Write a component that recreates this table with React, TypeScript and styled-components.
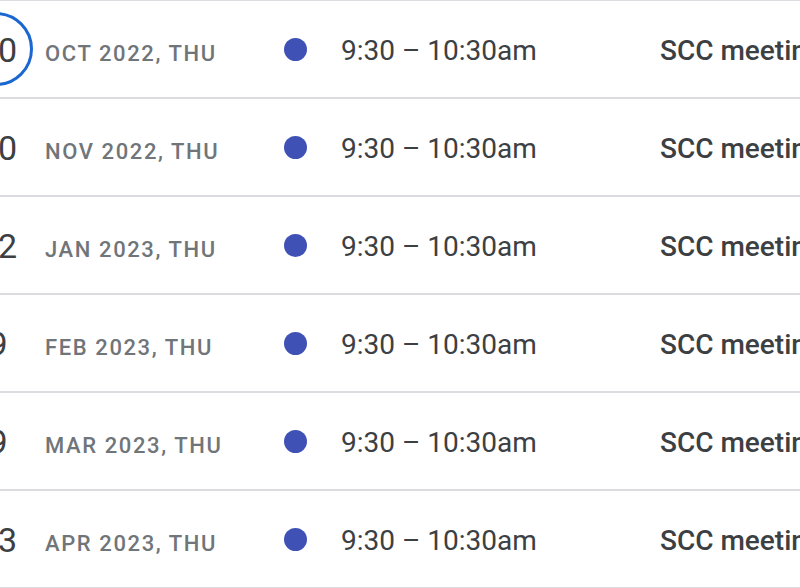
import React from "react";
import styled, { createGlobalStyle } from "styled-components";

const GlobalStyle = createGlobalStyle`
  html, body {
    margin: 0;
    padding: 0;
    background: #ffffff;
    overflow: hidden;
  }
  body {
    font-family: Roboto, "Noto Sans", Arial, sans-serif;
  }
`;

const Agenda = styled.div`
  width: 800px;
  height: 589px;
  overflow: hidden;
  margin-top: -1px;
`;

const Row = styled.div`
  display: flex;
  align-items: center;
  box-sizing: border-box;
  height: 98px;
  border-top: 2px solid #dadce0;
  margin-left: -44px;
  white-space: nowrap;

  &:last-child {
    height: 100px;
    border-bottom: 2px solid #dadce0;
  }
`;

const DayCell = styled.div`
  flex: 0 0 80px;
  display: flex;
  align-items: center;
  justify-content: center;
`;

const DayNumber = styled.div<{ $current?: boolean }>`
  width: 74px;
  height: 74px;
  box-sizing: border-box;
  border-radius: 50%;
  border: 3px solid ${(p) => (p.$current ? "#1a67d2" : "transparent")};
  display: flex;
  align-items: center;
  justify-content: center;
  font-size: 34px;
  font-weight: 400;
  color: #3c4043;
  padding-top: 2px;
  padding-left: 4px;
`;

const DateLabel = styled.div`
  flex: 0 0 239px;
  margin-left: 9px;
  font-size: 22px;
  font-weight: 500;
  letter-spacing: 1.6px;
  color: #70757a;
  text-transform: uppercase;
  padding-top: 9px;
`;

const Dot = styled.span<{ $color: string }>`
  flex: 0 0 23px;
  height: 23px;
  border-radius: 50%;
  background: ${(p) => p.$color};
  margin-right: 34px;
`;

const Time = styled.div`
  flex: 0 0 319px;
  font-size: 28px;
  color: #3c4043;
  padding-top: 2px;
`;

const Title = styled.div`
  font-size: 28px;
  font-weight: 500;
  color: #3c4043;
  padding-top: 2px;
`;

const events = [
  { day: "20", label: "Oct 2022, Thu", current: true },
  { day: "10", label: "Nov 2022, Thu" },
  { day: "12", label: "Jan 2023, Thu" },
  { day: "9", label: "Feb 2023, Thu" },
  { day: "9", label: "Mar 2023, Thu" },
  { day: "13", label: "Apr 2023, Thu" },
];

export default function App() {
  return (
    <>
      <GlobalStyle />
      <Agenda>
        {events.map((e, i) => (
          <Row key={i}>
            <DayCell>
              <DayNumber $current={e.current}>{e.day}</DayNumber>
            </DayCell>
            <DateLabel>{e.label}</DateLabel>
            <Dot $color="#3f51b5" />
            <Time>9:30 – 10:30am</Time>
            <Title>SCC meeting</Title>
          </Row>
        ))}
      </Agenda>
    </>
  );
}
